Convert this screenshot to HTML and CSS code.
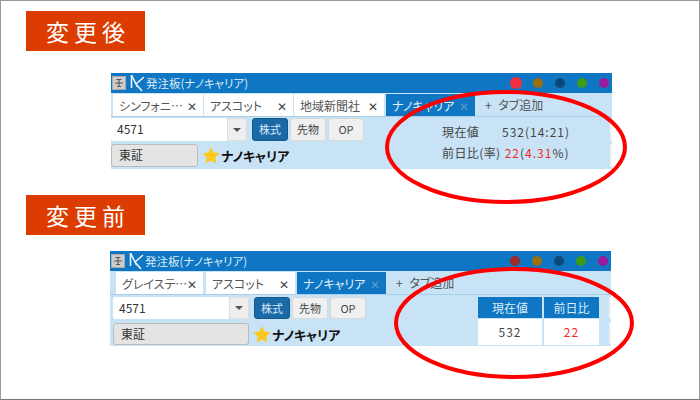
FILE: index.html
```html
<!DOCTYPE html>
<html lang="ja">
<head>
  <meta charset="UTF-8">
  <title>発注板 変更後 変更前</title>
  <link rel="stylesheet" href="styles.css">
</head>
<body>

<div class="slide">

  <div class="label">変更後</div>

  <section class="board board-after">
    <div class="titlebar">
      <span class="pin"><svg width="10" height="10" viewBox="0 0 10 10"><path d="M2.5 1.5h5M5 1.5v7M1 5h8M3 8.5h4" fill="none" stroke="#555" stroke-width="1.1"/></svg></span>
      <svg class="logo" width="16" height="18" viewBox="0 0 16 18"><path d="M2.5 1v13M2.5 1l6 12M15 3L7 10l6 7" fill="none" stroke="#e8f2fb" stroke-width="1.6"/></svg>
      <span class="title">発注板(ナノキャリア)</span>
      <span class="dots">
        <i class="dot dot-big"></i><i class="dot dot-brown"></i><i class="dot dot-navy"></i><i class="dot dot-green"></i><i class="dot dot-purple"></i>
      </span>
    </div>
    <div class="tabs">
      <span class="tab tab-w90">シンフォニ… <b>✕</b></span>
      <span class="tab tab-w89">アスコット <b>✕</b></span>
      <span class="tab tab-w90">地域新聞社 <b>✕</b></span>
      <span class="tab tab-on">ナノキャリア <b>✕</b></span>
      <span class="tab-add">+ タブ追加</span>
    </div>
    <div class="body">
      <div class="controls">
        <div class="row">
          <span class="code">4571</span>
          <span class="drop"><i></i></span>
          <span class="btn btn-on">株式</span>
          <span class="btn">先物</span>
          <span class="btn">OP</span>
        </div>
        <div class="row">
          <span class="market market-short">東証</span>
          <svg class="star" width="18" height="17" viewBox="0 0 18 17"><path d="M9 0l2.6 5.6 6.1.7-4.5 4.2 1.2 6L9 13.5 3.6 16.5l1.2-6L.3 6.3l6.1-.7z" fill="#fdc81e"/></svg>
          <span class="name">ナノキャリア</span>
        </div>
      </div>
      <div class="info">
        <div><span class="info-key">現在値</span><span class="info-val">532(14:21)</span></div>
        <div><span class="info-key">前日比(率)</span> <span class="info-val"><em>22</em>(<em>4.31</em>%)</span></div>
      </div>
      <div class="edge"><i></i><i></i></div>
    </div>
  </section>

  <div class="label label-next">変更前</div>

  <section class="board board-before">
    <div class="titlebar">
      <span class="pin"><svg width="10" height="10" viewBox="0 0 10 10"><path d="M2.5 1.5h5M5 1.5v7M1 5h8M3 8.5h4" fill="none" stroke="#555" stroke-width="1.1"/></svg></span>
      <svg class="logo" width="16" height="18" viewBox="0 0 16 18"><path d="M2.5 1v13M2.5 1l6 12M15 3L7 10l6 7" fill="none" stroke="#e8f2fb" stroke-width="1.6"/></svg>
      <span class="title">発注板(ナノキャリア)</span>
      <span class="dots">
        <i class="dot dot-red"></i><i class="dot dot-brown"></i><i class="dot dot-navy"></i><i class="dot dot-green"></i><i class="dot dot-purple"></i>
      </span>
    </div>
    <div class="tabs">
      <span class="tab tab-w87">グレイステ… <b>✕</b></span>
      <span class="tab tab-w89">アスコット <b>✕</b></span>
      <span class="tab tab-on">ナノキャリア <b>✕</b></span>
      <span class="tab-add">+ タブ追加</span>
    </div>
    <div class="body">
      <div class="controls">
        <div class="row">
          <span class="code">4571</span>
          <span class="drop"><i></i></span>
          <span class="btn btn-on">株式</span>
          <span class="btn">先物</span>
          <span class="btn">OP</span>
        </div>
        <div class="row">
          <span class="market market-long">東証</span>
          <svg class="star" width="18" height="17" viewBox="0 0 18 17"><path d="M9 0l2.6 5.6 6.1.7-4.5 4.2 1.2 6L9 13.5 3.6 16.5l1.2-6L.3 6.3l6.1-.7z" fill="#fdc81e"/></svg>
          <span class="name">ナノキャリア</span>
        </div>
      </div>
      <div class="quote">
        <div class="col col-now"><span class="col-head">現在値</span><span class="col-val">532</span></div>
        <div class="col col-prev"><span class="col-head">前日比</span><span class="col-val col-red">22</span></div>
      </div>
      <div class="edge"><i></i><i></i></div>
    </div>
  </section>

  <svg class="circle circle-after" width="250" height="120" viewBox="0 0 250 120"><ellipse cx="125" cy="60" rx="119" ry="55" fill="none" stroke="#f00" stroke-width="4"/></svg>
  <svg class="circle circle-before" width="250" height="120" viewBox="0 0 250 120"><ellipse cx="125" cy="60" rx="118" ry="54" fill="none" stroke="#f00" stroke-width="4"/></svg>
</div>

</body>
</html>
```

FILE: styles.css
```css
* { box-sizing: border-box; }
body { margin: 0; font-family: "Noto Sans CJK JP", "Liberation Sans", sans-serif; background: #fff; }
i, em, b { font-style: normal; font-weight: normal; }

.slide { position: relative; width: 700px; height: 400px; border: 1px solid #999; border-bottom-color: #777; padding: 10px 0 0 25px; overflow: hidden; }

.label { width: 119px; height: 40px; padding-left: 5px; background: #dc3c00; color: #fff; font-size: 23px; line-height: 40px; text-align: center; letter-spacing: 5px; }
.label-next { margin-top: 26px; }

.board { width: 501px; background: #c8e3f5; color: #333; font-size: 12px; font-feature-settings: "palt"; }
.board-after { margin: 22px 0 0 85px; height: 96px; }
.board-before { margin: 16px 0 0 84px; height: 95px; }

.titlebar { display: flex; align-items: center; height: 20px; background: #0e76c2; color: #fff; }
.pin { display: flex; align-items: center; justify-content: center; width: 14px; height: 14px; margin-left: 1px; background: #ccc; border: 1px solid #aaa; }
.logo { margin-left: 3px; }
.title { margin-left: 1px; font-size: 11.5px; color: #dcecf8; }
.dots { display: flex; align-items: center; margin-left: auto; }
.dot { width: 10px; height: 10px; margin-right: 12px; border-radius: 50%; }
.dot:last-child { margin-right: 3px; }
.dot-big { width: 12px; height: 12px; margin-right: 11px; background: #f03040; }
.dot-red { background: #a02828; }
.dot-brown { background: #9a7010; }
.dot-navy { background: #0e4a78; }
.dot-green { background: #3f9a18; }
.dot-purple { background: #9a1a9a; }

.tabs { display: flex; align-items: flex-end; height: 24px; padding-left: 2px; border-bottom: 1px solid #a9d0ea; }
.tab { display: flex; align-items: center; justify-content: space-between; height: 22px; margin-right: 1px; padding: 0 6px; background: #fff; color: #555; white-space: nowrap; }
.tab b { font-size: 12px; color: #444; }
.tab-w90 { width: 90px; }
.tab-w89 { width: 89px; }
.tab-w87 { width: 87px; margin-left: 4px; margin-right: 3px; }
.tab-on { width: 89px; margin-left: 1px; background: #0e76c2; color: #e4f1fa; }
.tab-on b { color: #5d9ccc; }
.tab-add { margin-left: 9px; line-height: 22px; color: #555; word-spacing: 4px; white-space: nowrap; }

.body { display: flex; position: relative; height: 51px; }
.controls { display: flex; flex-direction: column; gap: 3px; padding-top: 1px; }
.row { display: flex; align-items: center; height: 23px; }
.board-before .controls { padding-top: 2px; gap: 4px; }
.board-before .row { height: 22px; padding-left: 3px; }
.code { width: 116px; height: 100%; padding-left: 6px; background: #fff; font-size: 12px; line-height: 22px; border-radius: 2px 0 0 2px; }
.drop { display: flex; align-items: center; justify-content: center; width: 20px; height: 100%; margin-right: 5px; background: #eee; border: 1px solid #ddd; }
.drop i { border: 4px solid transparent; border-top-color: #555; border-bottom: 0; }
.btn { width: 36px; height: 100%; margin-right: 2px; background: #f0f0f0; border: 1px solid #d8d8d8; border-radius: 3px; font-size: 11px; line-height: 20px; text-align: center; color: #444; }
.btn-on { background: #1a6aa8; border-color: #15588c; color: #d8e8f4; }
.market { height: 100%; padding-left: 7px; background: #e4e4e4; border: 1px solid #bbb; border-radius: 3px; font-size: 12px; line-height: 20px; color: #333; }
.market-short { width: 87px; }
.market-long { width: 136px; }
.star { margin-left: 4px; }
.name { margin-left: 1px; font-size: 13px; font-weight: 700; color: #111; white-space: nowrap; }

.info { position: absolute; left: 331px; top: 4px; font-size: 12px; line-height: 21px; color: #444; white-space: nowrap; }
.info-key { display: inline-block; min-width: 60px; letter-spacing: .4px; }
.info-val { letter-spacing: 1px; }
.info em { color: #f02828; }

.quote { position: absolute; left: 368px; top: 2px; display: flex; gap: 2px; }
.col { display: flex; flex-direction: column; gap: 1px; }
.col-now { width: 64px; }
.col-prev { width: 55px; }
.col-head { height: 21px; background: #0e76c2; color: #dcecf8; font-size: 12px; line-height: 21px; text-align: center; }
.col-val { height: 26px; background: #fff; color: #444; font-size: 12px; line-height: 26px; text-align: center; letter-spacing: 1px; }
.col-red { color: #f02828; }

.edge { position: absolute; right: 0; top: 2px; display: flex; flex-direction: column; gap: 3px; }
.edge i { display: block; width: 2px; height: 22px; background: #f4f4f4; }

.circle { position: absolute; }
.circle-after { left: 380px; top: 86px; }
.circle-before { left: 388px; top: 262px; }
```
